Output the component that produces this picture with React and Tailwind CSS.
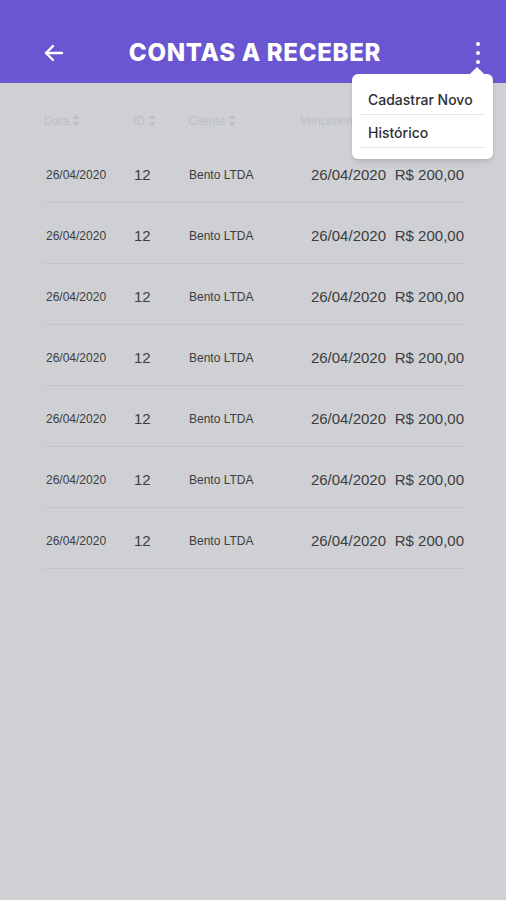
import React from 'react';

const rows = Array.from({ length: 7 }, () => ({
  data: '26/04/2020',
  id: '12',
  cliente: 'Bento LTDA',
  vencimento: '26/04/2020',
  valor: 'R$ 200,00',
}));

const SortIcon = () => (
  <svg width="8" height="13" viewBox="0 0 8 13" className="ml-[3px] inline-block">
    <path d="M4 0.5 L7.5 5 L0.5 5 Z" fill="currentColor" />
    <path d="M4 12.5 L7.5 8 L0.5 8 Z" fill="currentColor" />
  </svg>
);

const App = () => {
  return (
    <div className="relative w-[506px] h-[900px] bg-[#cfd0d3] overflow-hidden" style={{ fontFamily: '"Liberation Sans", Arial, sans-serif' }}>
      {/* Header */}
      <div className="h-[83px] bg-[#6a56d0] flex items-center px-[42px] pt-[22px]">
        <svg width="24" height="24" viewBox="0 0 24 24" fill="none" stroke="white" strokeWidth="2.4" strokeLinecap="round" strokeLinejoin="round">
          <path d="M20 12H4" />
          <path d="M11 5l-7 7 7 7" />
        </svg>
        <h1 className="flex-1 text-center text-white text-[24px] font-extrabold tracking-[0.7px] pr-[22px]" style={{ fontFamily: 'Inter, "Open Sans", sans-serif' }}>
          CONTAS A RECEBER
        </h1>
        <div className="flex flex-col gap-[5px] items-center mr-[-26px] w-[24px]">
          <span className="w-[4px] h-[4px] rounded-full bg-white" />
          <span className="w-[4px] h-[4px] rounded-full bg-white" />
          <span className="w-[4px] h-[4px] rounded-full bg-white" />
        </div>
      </div>

      {/* Table */}
      <div className="ml-[44px] w-[420px]">
        <div className="h-[59px] flex items-center text-[12px] text-[#bdbfc3] pt-[16px]">
          <div className="w-[89px] flex items-center">Data<SortIcon /></div>
          <div className="w-[55px] flex items-center">ID<SortIcon /></div>
          <div className="w-[112px] flex items-center">Cliente<SortIcon /></div>
          <div className="w-[164px] flex items-center">Vencimento<SortIcon /></div>
        </div>
        {rows.map((r, i) => (
          <div key={i} className="h-[61px] flex items-center border-b border-[#c3c5c8] text-[#3d3d3f] pt-[6px]">
            <div className="w-[89px] pl-[2px] text-[12px]">{r.data}</div>
            <div className="w-[55px] pl-[1px] text-[15px]">{r.id}</div>
            <div className="w-[112px] pl-[1px] text-[12px]">{r.cliente}</div>
            <div className="w-[86px] text-right text-[15px]">{r.vencimento}</div>
            <div className="w-[78px] text-right text-[15px]">{r.valor}</div>
          </div>
        ))}
      </div>

      {/* Dropdown menu */}
      <div className="absolute left-[352px] top-[74px] w-[141px] bg-white rounded-[6px] shadow-md px-[8px] pt-[10px] pb-[11px]" style={{ fontFamily: 'Inter, "Open Sans", sans-serif' }}>
        <div className="absolute -top-[5px] left-[120px] w-[10px] h-[10px] bg-white rotate-45" />
        <div className="relative h-[31px] flex items-center pl-[8px] text-[14px] font-medium text-[#2e2e33] border-b border-[#e6e6e8]">
          Cadastrar Novo
        </div>
        <div className="relative h-[33px] flex items-center pl-[8px] pt-[3px] text-[14px] font-medium text-[#2e2e33] border-b border-[#e6e6e8]">
          Histórico
        </div>
      </div>
    </div>
  );
};

export default App;
